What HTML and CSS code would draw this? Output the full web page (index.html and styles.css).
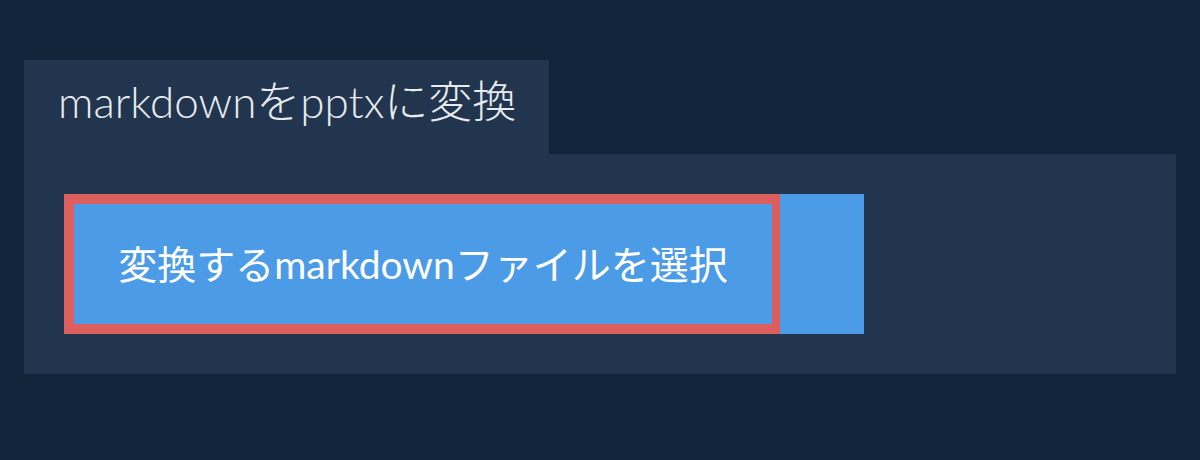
FILE: index.html
```html
<!DOCTYPE html>
<html lang="ja">
<head>
<meta charset="utf-8">
<title>markdownをpptxに変換</title>
<link rel="stylesheet" href="styles.css">
</head>
<body>
<div class="page">
  <div class="tab"><span class="tab-title">markdownをpptxに変換</span></div>
  <div class="panel">
    <div class="button">
      <span class="label">変換するmarkdownファイルを選択</span>
    </div>
  </div>
</div>
</body>
</html>
```
FILE: styles.css
```css
html, body {
  margin: 0;
  padding: 0;
  background: #10243a;
  width: 1200px;
  height: 460px;
  overflow: hidden;
}
.page {
  padding: 60px 24px 0 24px;
  display: flex;
  flex-direction: column;
  align-items: flex-start;
  font-family: Lato, "Noto Sans CJK JP", sans-serif;
}
.tab {
  box-sizing: border-box;
  background: #21354f;
  height: 94px;
  padding: 0 33px 12px 34px;
  display: flex;
  align-items: center;
}
.tab-title {
  color: #e8ebee;
  font-size: 44px;
  font-weight: 300;
  line-height: 1;
}
.panel {
  align-self: stretch;
  background: #21354f;
  padding: 40px;
  display: flex;
}
.button {
  width: 800px;
  height: 140px;
  background: #4b9be6;
  display: flex;
}
.label {
  box-sizing: border-box;
  width: 716px;
  height: 140px;
  border: 10px solid #dc5f5d;
  border-right-width: 8px;
  display: flex;
  align-items: center;
  justify-content: center;
  color: #ffffff;
  font-size: 39px;
  line-height: 1;
}
```
